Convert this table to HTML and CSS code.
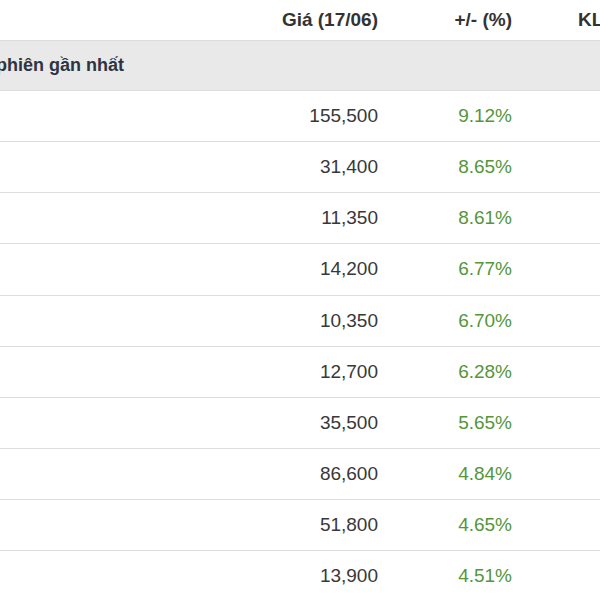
FILE: index.html
```html
<!DOCTYPE html>
<html lang="vi">
<head>
<meta charset="utf-8">
<link rel="stylesheet" href="styles.css">
</head>
<body>
<div class="viewport">
<table class="stocks">
  <colgroup>
    <col class="c-name"><col class="c-price"><col class="c-pct"><col class="c-vol">
  </colgroup>
  <thead>
    <tr><th class="name"></th><th class="num">Giá (17/06)</th><th class="num">+/- (%)</th><th class="vol">KL khớp</th></tr>
  </thead>
  <tbody>
    <tr class="section"><td colspan="4"><span class="section-title">phiên gần nhất</span></td></tr>
    <tr><td></td><td class="num">155,500</td><td class="num up">9.12%</td><td></td></tr>
    <tr><td></td><td class="num">31,400</td><td class="num up">8.65%</td><td></td></tr>
    <tr><td></td><td class="num">11,350</td><td class="num up">8.61%</td><td></td></tr>
    <tr><td></td><td class="num">14,200</td><td class="num up">6.77%</td><td></td></tr>
    <tr><td></td><td class="num">10,350</td><td class="num up">6.70%</td><td></td></tr>
    <tr><td></td><td class="num">12,700</td><td class="num up">6.28%</td><td></td></tr>
    <tr><td></td><td class="num">35,500</td><td class="num up">5.65%</td><td></td></tr>
    <tr><td></td><td class="num">86,600</td><td class="num up">4.84%</td><td></td></tr>
    <tr><td></td><td class="num">51,800</td><td class="num up">4.65%</td><td></td></tr>
    <tr><td></td><td class="num">13,900</td><td class="num up">4.51%</td><td></td></tr>
  </tbody>
</table>
</div>
</body>
</html>
```
FILE: styles.css
```css
html, body {
  margin: 0;
  padding: 0;
  background: #fff;
}
.viewport {
  width: 600px;
  height: 600px;
  overflow: hidden;
}
.stocks {
  margin-left: -200px;
  width: 900px;
  table-layout: fixed;
  border-collapse: collapse;
  font-family: "Liberation Sans", Arial, sans-serif;
  font-size: 19px;
  color: #383838;
}
.c-name { width: 200px; }
.c-price { width: 388px; }
.c-pct { width: 134px; }
.c-vol { width: 178px; }
.stocks th {
  height: 40px;
  padding: 0 10px;
  font-weight: bold;
  color: #333;
  border-bottom: 1px solid #dcdcdc;
  vertical-align: middle;
}
.stocks td {
  height: 50.125px;
  padding: 0 10px;
  border-bottom: 1px solid #dedede;
  vertical-align: middle;
}
.num { text-align: right; }
.vol { text-align: left; padding-left: 56px !important; }
.up { color: #54963a; }
.section td {
  height: 49px;
  background: #e9e9e9;
  padding: 0;
}
.section-title {
  display: block;
  margin-left: 196px;
  font-size: 18px;
  font-weight: bold;
  color: #2e3440;
}
```
